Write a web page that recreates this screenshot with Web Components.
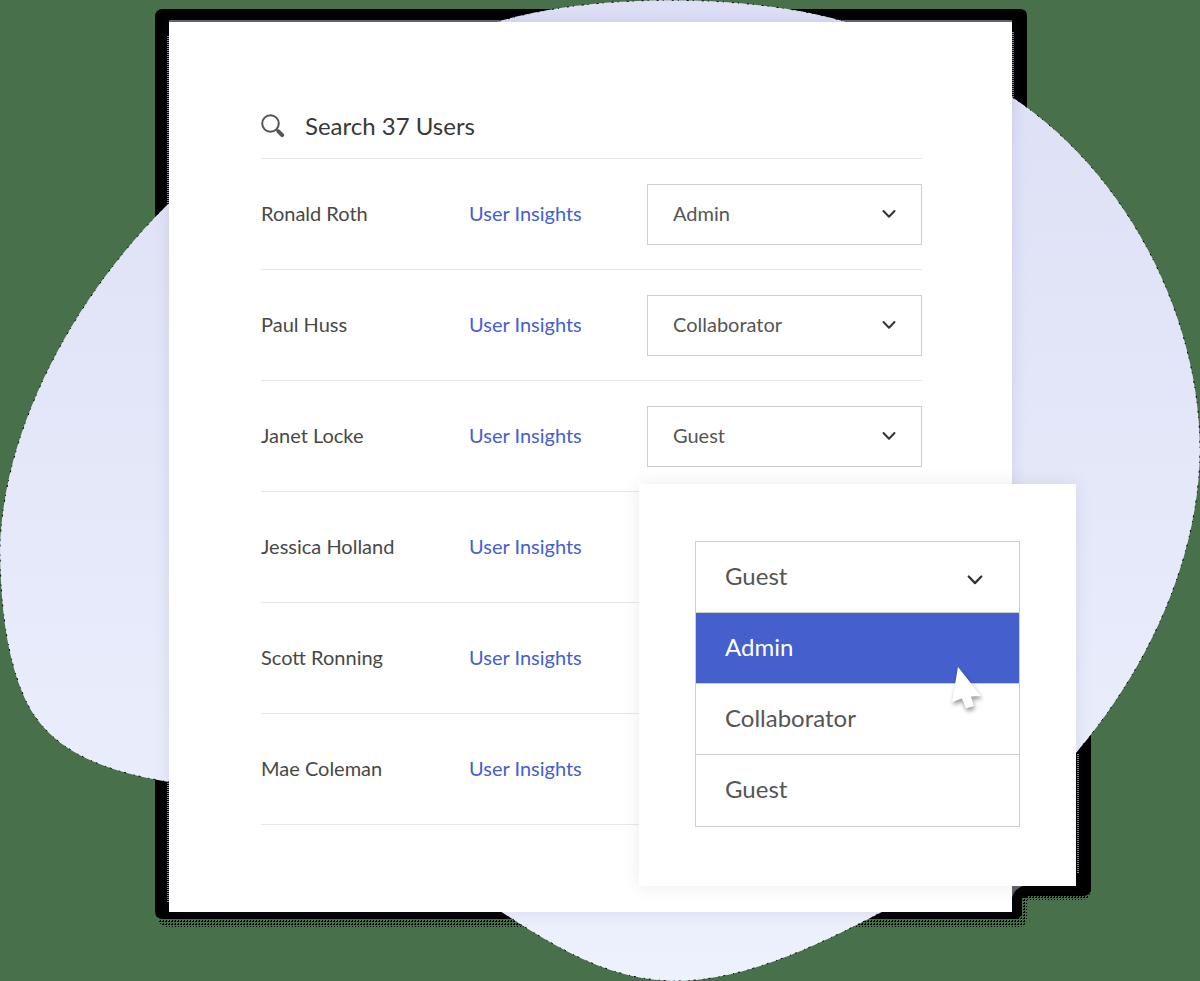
<!DOCTYPE html>
<html lang="en">
<head>
<meta charset="utf-8">
<meta name="viewport" content="width=device-width, initial-scale=1">
<title>Users</title>
<style>
    body{
        margin:0;
        background-color:#48704a;
        color:#484848;
        font-family:Lato, "Liberation Sans", sans-serif;
        font-size:20px;
        --line:#e8e8e8;
        --border:#cecece;
        --accent:#4460cc;
    }
</style>
</head>
<body>
<users-page>
    <blob-backdrop slot="backdrop"></blob-backdrop>
    <user-search label="Search 37 Users"></user-search>
    <user-table></user-table>
    <role-menu slot="popup" value="Guest" active="Admin"></role-menu>
</users-page>

<script>
const ROLES = ['Admin', 'Collaborator', 'Guest'];

const USERS = [
    {name:'Ronald Roth', role:'Admin'},
    {name:'Paul Huss', role:'Collaborator'},
    {name:'Janet Locke', role:'Guest'},
    {name:'Jessica Holland'},
    {name:'Scott Ronning'},
    {name:'Mae Coleman'}
];

const CHEVRON = `
    <svg class="chevron" viewBox="0 0 14 10" aria-hidden="true">
        <path d="M1.5 2 L7 7.7 L12.5 2" fill="none" stroke="#333" stroke-width="2" stroke-linecap="round" stroke-linejoin="round"/>
    </svg>
`;

//page frame: backdrop, white card and the popup over its corner
class UsersPage extends HTMLElement {
    constructor(){
        super();
        this.attachShadow({mode:'open'});

        this.shadowRoot.innerHTML = `
            <style>
                :host{
                    display:block;
                    position:relative;
                    box-sizing:border-box;
                    min-height:100vh;
                    padding:22px 188px 69px 169px;
                    overflow:hidden;
                }

                main{
                    position:relative;
                    padding:80px 90px 87px 92px;
                    background-color:white;
                    box-shadow:0 0 14px rgba(80,70,140,0.14);
                }

                .popup{
                    position:absolute;
                    right:-64px;
                    bottom:26px;
                    box-sizing:border-box;
                    width:437px;
                    padding:57px 56px 59px;
                    background-color:white;
                    box-shadow:0 0 16px rgba(60,60,90,0.1);
                }
            </style>
            <slot name="backdrop"></slot>
            <main>
                <slot></slot>
                <div class="popup"><slot name="popup"></slot></div>
            </main>
        `;
    }
}

class BlobBackdrop extends HTMLElement {
    constructor(){
        super();
        this.attachShadow({mode:'open'});

        this.shadowRoot.innerHTML = `
            <style>
                :host{
                    display:block;
                    position:absolute;
                    inset:0;
                }

                svg{
                    display:block;
                    width:100%;
                    height:100%;
                }
            </style>
            <svg viewBox="0 0 1200 981" preserveAspectRatio="none" aria-hidden="true">
                <defs>
                    <linearGradient id="fill" x1="0" y1="0" x2="0" y2="1">
                        <stop offset="0" stop-color="#dddff5"/>
                        <stop offset="1" stop-color="#ecf1fd"/>
                    </linearGradient>
                    <pattern id="dots" width="3" height="3" patternUnits="userSpaceOnUse">
                        <rect width="2" height="1"/>
                        <rect x="1" y="2" width="1" height="1"/>
                    </pattern>
                </defs>
                <path d="M163 9 H1020 Q1027 9 1027 16 V898 H1022 V914 Q1020 919 1014 919 H163 Q155 919 155 911 V17 Q155 9 163 9 Z"/>
                <path d="M1060 700 H1091 V888 Q1091 896 1083 896 H1014 V880 H1060 Z"/>
                <path d="M158 919 H1014 L1020 896 H1083 Q1090 896 1091 886 V890 Q1090 900 1080 900 H1027 V917 Q1027 927 1017 927 H168 Q160 927 158 919 Z" fill="url(#dots)"/>
                <path d="M169 21 H1012" stroke="#66636c" stroke-width="2"/>
                <path d="M168 36 V203 M168 783 V902 M1013 32 V97 M1078 754 V874" stroke="#8c8a92" stroke-width="2" stroke-dasharray="1 1"/>
                <path d="M1012 886 H1023 Q1014 889 1012 898 Z" fill="#66666a"/>
                <path d="M169 203 C260 120 380 50 497 22 C590 -7 750 -7 846 22 C905 40 960 65 1012 97
                    C1130 175 1200 320 1200 450 C1199 560 1147 670 1076 753 C1030 810 960 870 880 913
                    C800 955 735 981 675 981 C610 980 560 950 503 913 C420 850 320 805 169 782
                    C90 769 50 745 28 705 C8 665 0 610 0 545 C5 420 80 290 169 203 Z"
                    fill="url(#fill)" stroke="#000" stroke-width="1" stroke-dasharray="2 4 1 8"/>
            </svg>
        `;
    }
}

class UserSearch extends HTMLElement {
    constructor(){
        super();
        this.attachShadow({mode:'open'});

        this.shadowRoot.innerHTML = `
            <style>
                :host{
                    display:block;
                    border-bottom:1px solid var(--line);
                }

                label{
                    display:flex;
                    align-items:center;
                    gap:19px;
                    height:48px;
                    padding-bottom:8px;
                }

                svg{
                    flex:none;
                    width:25px;
                    height:25px;
                }

                input{
                    flex:1;
                    min-width:0;
                    padding:0;
                    border:0;
                    outline:0;
                    background:none;
                    color:#383838;
                    font:inherit;
                    font-size:24px;
                    line-height:32px;
                }

                input::placeholder{
                    color:#383838;
                    opacity:1;
                }
            </style>
            <label>
                <svg viewBox="0 0 25 25" fill="none" stroke="#555" aria-hidden="true">
                    <circle cx="9.5" cy="9.5" r="8.3" stroke-width="2"/>
                    <path d="M15.4 15.4 L18 18" stroke-width="2"/>
                    <path d="M17.4 17.4 L21.200 21.200" stroke-width="4" stroke-linecap="round"/>
                </svg>
                <input type="search">
            </label>
        `;
    }

    connectedCallback(){
        const input = this.shadowRoot.querySelector('input');
        input.placeholder = this.getAttribute('label');
        input.setAttribute('aria-label', this.getAttribute('label'));
    }
}

class UserTable extends HTMLElement {
    constructor(){
        super();
        this.attachShadow({mode:'open'});

        this.shadowRoot.innerHTML = `
            <style>
                :host{
                    display:block;
                }

                table{
                    width:100%;
                    table-layout:fixed;
                    border-collapse:separate;
                    border-spacing:0;
                }

                .name{
                    width:208px;
                }

                .insights{
                    width:178px;
                }

                th, td{
                    box-sizing:border-box;
                    height:111px;
                    padding:0 0 3px;
                    border-bottom:1px solid var(--line);
                    font-weight:400;
                    text-align:left;
                    vertical-align:middle;
                }

                td:last-child{
                    padding-bottom:0;
                }

                a{
                    color:var(--accent);
                    text-decoration:none;
                }
            </style>
            <table aria-label="Users">
                <colgroup><col class="name"><col class="insights"><col></colgroup>
                <tbody></tbody>
            </table>
        `;
    }

    connectedCallback(){
        this.shadowRoot.querySelector('tbody').innerHTML = USERS.map(user => `
            <tr>
                <th scope="row">${user.name}</th>
                <td><a href="#insights">User Insights</a></td>
                <td>${user.role ? `<role-select user="${user.name}" value="${user.role}"></role-select>` : ''}</td>
            </tr>
        `).join('');
    }
}

class RoleSelect extends HTMLElement {
    constructor(){
        super();
        this.attachShadow({mode:'open'});

        this.shadowRoot.innerHTML = `
            <style>
                :host{
                    display:grid;
                    align-items:center;
                }

                select, .chevron{
                    grid-area:1 / 1;
                }

                select{
                    box-sizing:border-box;
                    width:100%;
                    height:61px;
                    padding:0 48px 2px 25px;
                    appearance:none;
                    border:1px solid var(--border);
                    border-radius:0;
                    background-color:white;
                    color:#555;
                    font:inherit;
                }

                .chevron{
                    justify-self:end;
                    width:14px;
                    height:10px;
                    margin-right:26px;
                    pointer-events:none;
                }
            </style>
            <select></select>
            ${CHEVRON}
        `;
    }

    connectedCallback(){
        const select = this.shadowRoot.querySelector('select');
        select.setAttribute('aria-label', 'Role of ' + this.getAttribute('user'));
        select.innerHTML = ROLES.map(role => `<option>${role}</option>`).join('');
        select.value = this.getAttribute('value');
    }
}

//opened drop-down with the pointer over the active role
class RoleMenu extends HTMLElement {
    constructor(){
        super();
        this.attachShadow({mode:'open'});

        this.shadowRoot.innerHTML = `
            <style>
                :host{
                    display:block;
                    position:relative;
                    border:1px solid var(--border);
                    font-size:24px;
                }

                button{
                    display:flex;
                    align-items:center;
                    justify-content:space-between;
                    box-sizing:border-box;
                    width:100%;
                    height:71px;
                    padding:0 36px 4px 29px;
                    border:0;
                    border-bottom:1px solid var(--border);
                    background-color:white;
                    color:#555;
                    font:inherit;
                    text-align:left;
                }

                [role=option]:last-child{
                    border-bottom:0;
                }

                button.active{
                    background-color:var(--accent);
                    color:white;
                }

                .chevron{
                    width:16px;
                    height:12px;
                    margin-top:10px;
                }

                .pointer{
                    position:absolute;
                    right:33px;
                    top:120px;
                    width:40px;
                    height:56px;
                    filter:drop-shadow(1px 3px 2px rgba(0,0,0,0.4));
                    pointer-events:none;
                }
            </style>
            <button class="current" aria-haspopup="listbox" aria-expanded="true"><span></span>${CHEVRON}</button>
            <div role="listbox" aria-label="Role"></div>
            <svg class="pointer" viewBox="0 0 40 56" aria-hidden="true">
                <path d="M12 5 L35 34 L25 34.5 L28 44 L20 46.5 L16 36.5 L6 40 Z" fill="#fff"/>
            </svg>
        `;
    }

    connectedCallback(){
        const active = this.getAttribute('active');
        this.shadowRoot.querySelector('.current span').textContent = this.getAttribute('value');
        this.shadowRoot.querySelector('[role=listbox]').innerHTML = ROLES.map(role => `
            <button role="option" aria-selected="${role === active}" class="${role === active ? 'active' : ''}">${role}</button>
        `).join('');
    }
}

customElements.define('users-page', UsersPage);
customElements.define('blob-backdrop', BlobBackdrop);
customElements.define('user-search', UserSearch);
customElements.define('role-select', RoleSelect);
customElements.define('user-table', UserTable);
customElements.define('role-menu', RoleMenu);
</script>
</body>
</html>
